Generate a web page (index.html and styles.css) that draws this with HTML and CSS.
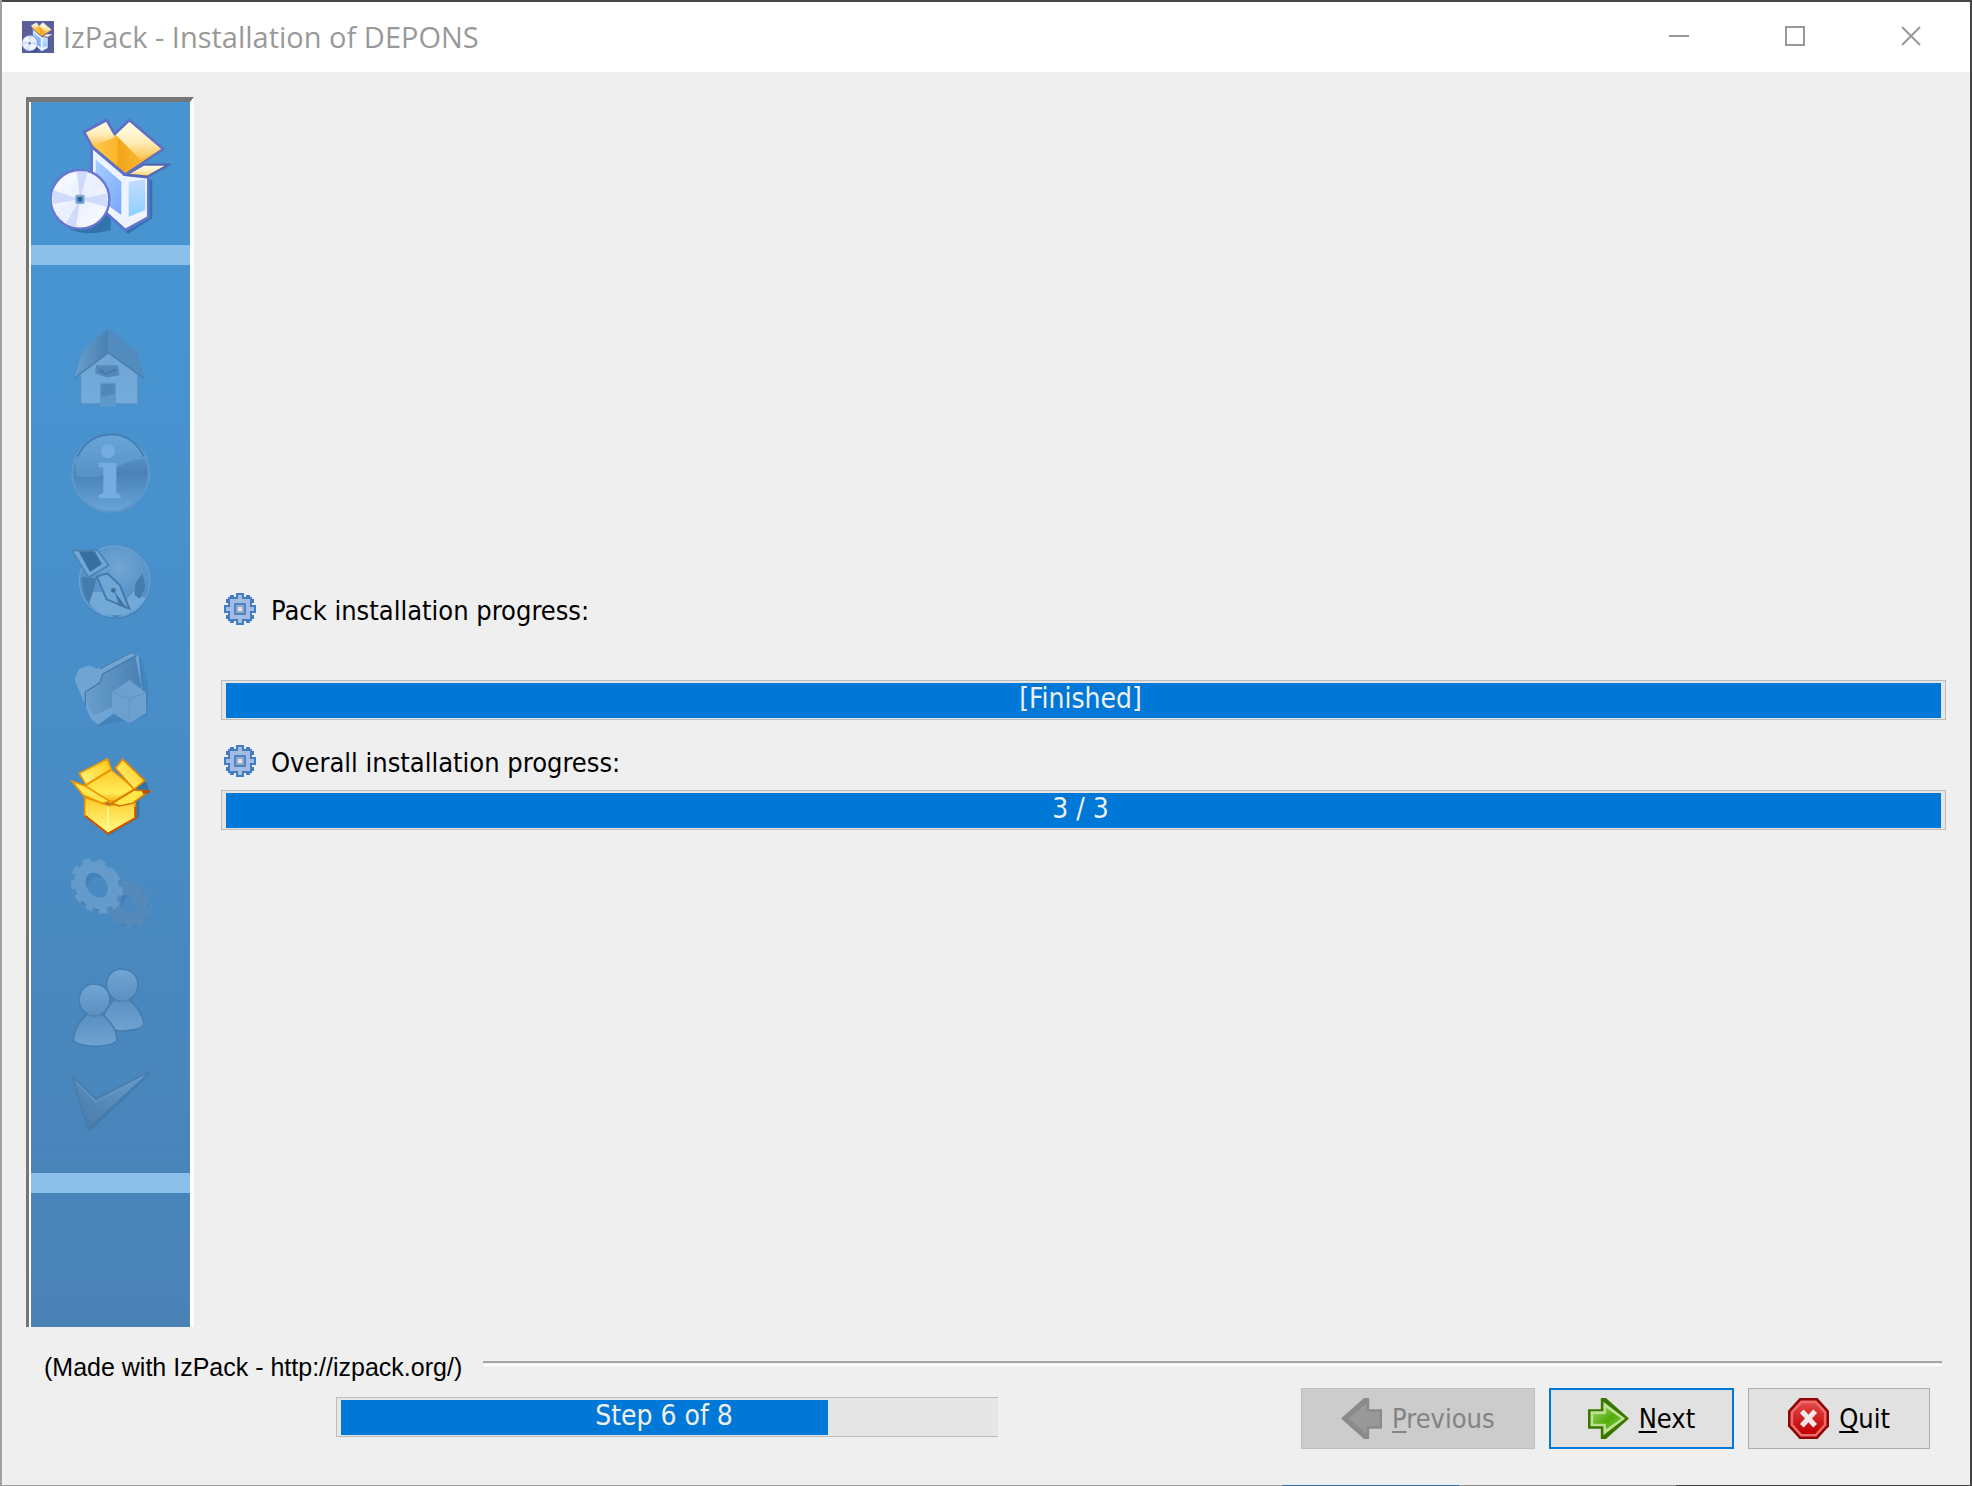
FILE: index.html
```html
<!DOCTYPE html>
<html lang="en">
<head>
<meta charset="utf-8">
<title>IzPack - Installation of DEPONS</title>
<link rel="stylesheet" href="styles.css">
</head>
<body>
<svg class="defs" aria-hidden="true">
  <defs>
    <linearGradient id="flap" x1="0" y1="0" x2="0" y2="1"><stop offset="0" stop-color="#ffffec"/><stop offset=".55" stop-color="#ffedb8"/><stop offset="1" stop-color="#ffc04a"/></linearGradient>
    <linearGradient id="inner" x1="0" y1="0" x2="1" y2="0"><stop offset="0" stop-color="#ffd057"/><stop offset=".42" stop-color="#fbb62c"/><stop offset=".44" stop-color="#f2a516"/><stop offset="1" stop-color="#ffc850"/></linearGradient>
    <linearGradient id="side" x1="0" y1="0" x2="1" y2="1"><stop offset="0" stop-color="#a9d0ff"/><stop offset="1" stop-color="#7aa6fa"/></linearGradient>
    <linearGradient id="front" x1="0" y1="0" x2="0" y2="1"><stop offset="0" stop-color="#c4dcff"/><stop offset="1" stop-color="#8dd0ff"/></linearGradient>
    <linearGradient id="disc" x1="0" y1="0" x2="1" y2="1"><stop offset="0" stop-color="#fff"/><stop offset=".5" stop-color="#e9efff"/><stop offset="1" stop-color="#fff"/></linearGradient>
    <linearGradient id="pale" x1="0" y1="0" x2="0" y2="1"><stop offset="0" stop-color="#6ea5d4"/><stop offset="1" stop-color="#75abdb"/></linearGradient>
    <linearGradient id="deep" x1="0" y1="0" x2="1" y2="0"><stop offset="0" stop-color="#689fcd"/><stop offset="1" stop-color="#4a80b2"/></linearGradient>
    <linearGradient id="ball" x1="0" y1="0" x2="0" y2="1"><stop offset="0" stop-color="#67a3d7"/><stop offset=".5" stop-color="#4a82b6"/><stop offset="1" stop-color="#69a5d8"/></linearGradient>
    <radialGradient id="globe" cx=".55" cy=".3" r=".7"><stop offset="0" stop-color="#72a6d4"/><stop offset=".5" stop-color="#5c97cb"/><stop offset="1" stop-color="#4e8abf"/></radialGradient>
    <linearGradient id="person" x1="0" y1="0" x2="0" y2="1"><stop offset="0" stop-color="#70a5d4"/><stop offset=".5" stop-color="#5b91c1"/><stop offset="1" stop-color="#6ea3d2"/></linearGradient>
    <linearGradient id="tick" x1="1" y1="0" x2="0" y2="1"><stop offset="0" stop-color="#6a9fcf"/><stop offset="1" stop-color="#4678a7"/></linearGradient>
    <linearGradient id="gold" x1="0" y1="0" x2="0" y2="1"><stop offset="0" stop-color="#ffc928"/><stop offset="1" stop-color="#ffff8a"/></linearGradient>
    <linearGradient id="goldlid" x1="0" y1="1" x2="1" y2="0"><stop offset="0" stop-color="#fff98a"/><stop offset="1" stop-color="#ffc70e"/></linearGradient>
    <linearGradient id="goldin" x1="0" y1="0" x2="0" y2="1"><stop offset="0" stop-color="#ffcb2d"/><stop offset=".7" stop-color="#ffec55"/><stop offset="1" stop-color="#f2a000"/></linearGradient>
    <linearGradient id="green" x1="0" y1="0" x2="1" y2="1"><stop offset="0" stop-color="#9fd46a"/><stop offset=".55" stop-color="#52ad0a"/><stop offset="1" stop-color="#7fc740"/></linearGradient>
    <linearGradient id="red" x1="0" y1="0" x2="0" y2="1"><stop offset="0" stop-color="#e04848"/><stop offset=".55" stop-color="#cf2020"/><stop offset="1" stop-color="#bf0000"/></linearGradient>
    <symbol id="installer" viewBox="151 348 360 360">
      <path d="M276 440 376 524 455 540V655L382 702 330 655V690Q240 715 190 675L300 520z" fill="#1d5289" opacity=".5"/>
      <path d="M273 440 372 524 443 532V652L374 690 273 600z" fill="#edf4ff" stroke="#6274cf" stroke-width="8" stroke-linejoin="round"/>
      <path d="M285 478 362 545V645L285 590z" fill="url(#side)"/>
      <path d="M384 545 434 538V630L384 650z" fill="url(#front)"/>
      <path d="M250 396 342 400 390 362 486 446 374 524 274 440z" fill="url(#inner)"/>
      <path d="M250 396 318 362 342 402 342 412 278 438z" fill="url(#flap)"/>
      <path d="M342 402 386 362 484 446 420 480z" fill="url(#flap)"/>
      <path d="M376 524 428 494 504 494 440 530z" fill="url(#flap)" stroke="#5264b4" stroke-width="7"/>
      <path d="M250 396 318 360 342 402 386 360 488 447 374 524 274 440z" fill="none" stroke="#5d6fc6" stroke-width="8" stroke-linejoin="round"/>
      <circle cx="238" cy="598" r="88" fill="url(#disc)" stroke="#6676d2" stroke-width="7"/>
      <path d="M238 598 228 514H262zM238 598 320 580V622zM238 598 226 682 196 670zM238 598 156 570V612z" fill="#c5d2fa" opacity=".75"/>
      <rect x="224" y="584" width="28" height="28" rx="6" fill="#7aa6d6"/><rect x="231" y="591" width="14" height="14" fill="#2d6493"/>
    </symbol>
    <symbol id="cog" viewBox="0 0 16 16">
      <path d="M6 0h4v16H6zM0 6h16v4H0zM3 1h2v14H3zM11 1h2v14h-2zM1 3h14v2H1zM1 11h14v2H1zM2 2h12v12H2z" fill="#447bc5"/>
      <path d="M3 3h10v10H3zM7 1h2v14H7zM1 7h14v2H1z" fill="#a3bce1"/>
      <path d="M5 5h6v6H5z" fill="#5382c3"/><path d="M6 6h4v4H6z" fill="#94abc8"/><path d="M7 7h2v2H7z" fill="#e6e6e6"/>
    </symbol>
  </defs>
</svg>
<div class="desktop">
  <div class="window">
    <header class="titlebar">
      <svg class="app-icon" aria-hidden="true"><use href="#installer"/></svg>
      <h1 class="title">IzPack - Installation of DEPONS</h1>
      <div class="controls">
        <button class="control" aria-label="Minimize"><svg class="glyph" viewBox="0 0 20 20"><path d="M0 10h20"/></svg></button>
        <button class="control" aria-label="Maximize"><svg class="glyph" viewBox="0 0 20 20"><path d="M1 1h18v18H1z"/></svg></button>
        <button class="control" aria-label="Close"><svg class="glyph" viewBox="0 0 20 20"><path d="M1 1l18 18M19 1 1 19"/></svg></button>
      </div>
    </header>

    <div class="body">
      <aside class="sidebar">
        <div class="brand"><svg class="logo" aria-hidden="true"><use href="#installer"/></svg></div>
        <ol class="steps">
          <li><svg class="step" viewBox="153 54 240 240" role="img" aria-label="Welcome">
            <path d="M181 190 265 122 354 190V282H181z" fill="url(#pale)" stroke="#5590c2" stroke-width="5"/>
            <path d="M265 56 188 122 162 205 265 128z" fill="url(#deep)"/>
            <path d="M265 56 350 122 372 205 265 128z" fill="#528bbd"/>
            <path d="M162 205 265 128 372 205" fill="none" stroke="#4a7fae" stroke-width="5"/>
            <path d="M228 166h66l4 30-32 6-20-4-20-8z" fill="#5489ba"/><path d="M238 180l20 12 30-14" fill="none" stroke="#437aab" stroke-width="7"/>
            <path d="M240 218h48v72h-48z" fill="#5d98ca"/><path d="M244 222h40v30l-40 8z" fill="#4f88b9"/>
          </svg></li>
          <li><svg class="step" viewBox="153 372 240 240" role="img" aria-label="Information">
            <circle cx="272" cy="490" r="115" fill="url(#ball)" stroke="#5d98cb" stroke-width="7"/>
            <path d="M166 450Q200 375 272 373T380 445Q320 450 280 480T166 498z" fill="#6ca8da" opacity=".45"/>
            <path d="M172 440Q205 374 272 373T372 440" fill="none" stroke="#427bae" stroke-width="5"/>
            <circle cx="264" cy="424" r="21" fill="#75ade0"/>
            <path d="M236 458h53v90l13 8v9h-66v-9l14-8v-76h-14z" fill="#75ade0"/>
          </svg></li>
          <li><svg class="step" viewBox="153 60 240 240" role="img" aria-label="License">
            <circle cx="286" cy="190" r="108" fill="#3f79ab" opacity=".4"/>
            <circle cx="284" cy="184" r="106" fill="url(#globe)" stroke="#68a0d0" stroke-width="4"/>
            <path d="M196 212 262 218 300 262 340 215 376 236Q345 285 284 288T196 225z" fill="#73a9d6"/>
            <path d="M185 170 228 175 222 208 206 252Q185 215 185 170zM346 190l22-30 8 40-16 36-16-10zM250 280q40 12 60 2l-20 10z" fill="#447cae"/>
            <path d="M230 170 262 160 300 196 328 266 260 238z" fill="#70a6d5" stroke="#447aab" stroke-width="6"/>
            <path d="M282 212l40 54-24-10z" fill="#42749f"/><circle cx="280" cy="211" r="7" fill="#386d9c"/>
            <path d="M156 92 232 90 266 136 206 172z" fill="#70a7d6" stroke="#4c82b2" stroke-width="5"/>
            <path d="M176 94h48l22 38-36 24z" fill="#396f9f"/>
          </svg></li>
          <li><svg class="step" viewBox="153 378 240 240" role="img" aria-label="Target folder">
            <path d="M230 620 380 588 386 500 362 410z" fill="#34699a" opacity=".25"/>
            <path d="M164 480 176 448 206 436 232 446 322 400 356 406 366 520 234 614 212 596z" fill="#70a5d3"/>
            <path d="M196 516 240 488 248 462 346 408 364 500 280 560 222 586 204 560z" fill="url(#deep)"/>
            <path d="M196 560V516L240 488 248 462 350 406M240 446 328 400" fill="none" stroke="#447aab" stroke-width="4"/>
            <path d="M276 516 328 480 378 518V580L328 610 276 578z" fill="#6ca0cf"/><path d="M276 516 328 536 378 518M328 536V608" fill="none" stroke="#6398c8" stroke-width="4"/>
          </svg></li>
          <li><svg class="step" viewBox="153 36 240 240" role="img" aria-label="Installation" aria-current="step">
            <path d="M204 220 264 288 358 232V170L390 158 376 120z" fill="#1b4d80" opacity=".4"/>
            <path d="M194 172 266 196 346 186V234L264 281 194 226z" fill="url(#gold)" stroke="#e88a00" stroke-width="5"/>
            <path d="M346 200V234L264 281 196 228" fill="none" stroke="#c95500" stroke-width="6"/>
            <path d="M196 138 274 90 344 146 272 190z" fill="url(#goldin)" stroke="#f09c00" stroke-width="4"/>
            <path d="M178 100 262 57 274 88 198 134z" fill="url(#goldlid)" stroke="#ee9700" stroke-width="5"/>
            <path d="M286 84 308 58 374 122 342 148z" fill="url(#goldlid)" stroke="#e88800" stroke-width="5"/>
            <path d="M156 124 196 138 270 184 246 190 190 166z" fill="#ffe54f" stroke="#ee9500" stroke-width="5"/>
            <path d="M276 190 342 150 388 153 338 190 298 198z" fill="#ffe847" stroke="#dd7600" stroke-width="5"/>
            <path d="M364 151h26v7l-20 4z" fill="#bd4d00"/><path d="M264 200v62" stroke="#fff59c" stroke-width="5"/>
          </svg></li>
          <li><svg class="step" viewBox="153 354 240 240" role="img" aria-label="Processing">
            <g fill="none" stroke="#386b9b" opacity=".3" transform="translate(5 6)"><ellipse cx="228" cy="438" rx="48" ry="50" stroke-width="32"/><ellipse cx="326" cy="494" rx="38" ry="46" stroke-width="30"/></g>
            <g fill="none" stroke="#5589b9"><ellipse cx="325" cy="494" rx="38" ry="48" stroke-width="34" transform="rotate(-25 325 494)"/><ellipse cx="325" cy="494" rx="56" ry="66" stroke-width="16" stroke-dasharray="21 16" transform="rotate(-25 325 494)"/></g>
            <g fill="none" stroke="#659bca"><ellipse cx="230" cy="436" rx="46" ry="58" stroke-width="34" transform="rotate(-35 230 436)"/><ellipse cx="230" cy="438" rx="64" ry="80" stroke-width="16" stroke-dasharray="24 19" transform="rotate(-35 230 438)"/></g>
          </svg></li>
          <li><svg class="step" viewBox="153 42 240 240" role="img" aria-label="User data">
            <g fill="url(#person)" stroke="#467daf" stroke-width="5">
              <path d="M284 148Q258 132 259 102 264 58 306 57 350 60 354 102 354 134 328 150 366 180 372 222 368 240 306 243 250 240 244 222 252 176 284 148z"/>
              <path d="M202 192Q176 178 177 148 182 104 222 102 266 104 270 148 270 178 244 192 286 222 292 268 288 286 226 289 164 286 160 268 166 222 202 192z"/>
            </g>
            <path d="M196 192q26 12 54 0M284 150q24 8 44 0" fill="none" stroke="#4a7fb0" stroke-width="4"/>
          </svg></li>
          <li><svg class="step" viewBox="153 360 240 240" role="img" aria-label="Finish">
            <path d="M164 390 236 452 390 374 210 546z" fill="#2e6293" opacity=".25"/>
            <path d="M156 378 228 446 392 364 204 538z" fill="url(#tick)" stroke="#457bac" stroke-width="4"/>
            <path d="M172 400 228 456 348 392" fill="none" stroke="#6497c4" stroke-width="4"/>
          </svg></li>
        </ol>
        <div class="sidebar-foot"></div>
      </aside>

      <main class="panel">
        <label class="caption" for="pack"><svg class="cog" aria-hidden="true"><use href="#cog"/></svg><span class="caption-text">Pack installation progress:</span></label>
        <div class="meter meter-pack"><progress class="bar" id="pack" value="1" max="1"></progress><span class="meter-text">[Finished]</span></div>
        <label class="caption" for="overall"><svg class="cog" aria-hidden="true"><use href="#cog"/></svg><span class="caption-text">Overall installation progress:</span></label>
        <div class="meter meter-overall"><progress class="bar" id="overall" value="3" max="3"></progress><span class="meter-text">3 / 3</span></div>
      </main>
    </div>

    <footer class="footer">
      <div class="credit"><span>(Made with IzPack - http://izpack.org/)</span><hr class="rule"></div>
      <div class="actions">
        <div class="meter meter-steps"><progress class="bar bar-open" value="6" max="8" aria-label="Installation step"></progress><span class="meter-text">Step 6 of 8</span></div>
        <div class="buttons">
          <button class="button" disabled><svg class="button-icon" viewBox="0 0 16 16"><path d="M16 4.400H11V0H9L0 8 9 16H11V12H16z" fill="#8b8b8b"/><path d="M15 5.400H10V2L3 8 10 14V11H15z" fill="#999"/></svg><span><u>P</u>revious</span></button>
          <button class="button button-default"><svg class="button-icon" viewBox="0 0 16 16"><path d="M0 4.400H5V0H7L16 8 7 16H5V12H0z" fill="#387600"/><path d="M1 5.200H6V1.500L14.500 8 6 14.500V11H1z" fill="#bde093"/><path d="M2 6.200H7V3.800L13 8 7 12.200V10H2z" fill="url(#green)"/></svg><span><u>N</u>ext</span></button>
          <button class="button"><svg class="button-icon" viewBox="0 0 16 16"><path d="M4.500 0h7L16 5v6l-4.500 5h-7L0 11V5z" fill="#900404"/><path d="M5 1h6l4 4.400v5.200L11 15H5l-4-4.400V5.400z" fill="#ef6a6a"/><path d="M5.400 2h5.200L14 5.800v4.400L10.600 14H5.400L2 10.200V5.800z" fill="url(#red)"/><path d="M5.400 5.200l5.200 5.600M10.600 5.200l-5.200 5.600" stroke="#f5eaea" stroke-width="2"/></svg><span><u>Q</u>uit</span></button>
        </div>
      </div>
    </footer>
  </div>
</div>
</body>
</html>
```
FILE: styles.css
```css
* {
  box-sizing: border-box;
}

body {
  margin: 0;
  font: 27px/32px "DejaVu Sans Condensed", "Noto Sans", sans-serif;
  color: #000;
}

.defs {
  position: absolute;
  width: 0;
  height: 0;
}

.desktop {
  display: flex;
  min-height: 100vh;
  padding: 2px 2px 1px;
  background: linear-gradient(to right, #a0a0a0 65%, #2e6ca4 65% 74%, #8c8c8c 74% 85%, #444 85%);
}

.window {
  flex: 1;
  display: flex;
  flex-direction: column;
  background: #efefef;
  box-shadow: 0 -2px 0 #474747;
}

.titlebar {
  display: flex;
  align-items: center;
  height: 70px;
  padding-left: 20px;
  background: #fff;
}

.app-icon {
  width: 32px;
  height: 32px;
  margin-right: 9px;
  background: #5a5f98;
}

.title {
  margin: 0;
  font: 29px/38px "Open Sans", sans-serif;
  color: #999;
}

.controls {
  display: flex;
  align-self: stretch;
  margin-left: auto;
  padding: 0 1px 2px 0;
}

.control {
  display: grid;
  place-items: center;
  width: 116px;
  padding: 0;
  border: 0;
  background: none;
}

.glyph {
  width: 20px;
  height: 20px;
  fill: none;
  stroke: #999;
  stroke-width: 2;
}

.body {
  flex: 1;
  display: flex;
  gap: 27px;
  padding: 25px 24px 0;
}

.sidebar {
  display: flex;
  flex-direction: column;
  width: 168px;
  border-top: 5px solid #767676;
  border-right: 4px solid #fff;
  border-left: 3px solid #767676;
  box-shadow: inset 2px 0 0 #fff;
  padding-left: 2px;
  background: linear-gradient(#4794d1, #4794d1 20%, #4a82b6) content-box;
}

.brand {
  display: flex;
  justify-content: center;
  height: 163px;
  padding-top: 14px;
  border-bottom: 20px solid #8cbfea;
}

.logo {
  width: 120px;
  height: 120px;
}

.steps {
  flex: 1;
  display: flex;
  flex-direction: column;
  align-items: center;
  gap: 26px;
  margin: 0;
  padding: 63px 0 0;
  border-bottom: 20px solid #8cbfea;
  list-style: none;
}

.step {
  display: block;
  width: 80px;
  height: 80px;
  overflow: visible;
}

.sidebar-foot {
  height: 134px;
}

.panel {
  flex: 1;
  display: flex;
  flex-direction: column;
  justify-content: center;
  padding-bottom: 2px;
}

.caption {
  display: flex;
  align-items: center;
  gap: 15px;
  padding-left: 3px;
}

.caption-text {
  padding-top: 4px;
  line-height: 28px;
}

.cog {
  width: 32px;
  height: 32px;
  shape-rendering: crispEdges;
}

.meter {
  display: grid;
  height: 40px;
}

.meter-pack {
  margin: 55px 0 25px;
}

.meter-overall {
  margin-top: 13px;
}

.meter-steps {
  flex: 0 1 662px;
  margin-bottom: 4px;
}

.bar,
.meter-text {
  grid-area: 1 / 1;
}

.bar {
  appearance: none;
  width: 100%;
  height: 100%;
  padding: 2px 4px 1px;
  border: 1px solid #bcbcbc;
  background: #e6e6e6;
}

.bar-open {
  padding-right: 8px;
  border-right: 0;
}

.bar::-webkit-progress-bar {
  background: none;
}

.bar::-webkit-progress-value {
  background: #0078d7;
}

.meter-text {
  z-index: 1;
  place-self: center;
  padding: 0 6px 2px 0;
  font-size: 28px;
  color: #efefef;
}

.footer {
  padding: 25px 40px 36px 42px;
}

.credit {
  display: flex;
  align-items: center;
  gap: 21px;
  margin-right: -12px;
  font: 25px/30px "Liberation Sans", sans-serif;
}

.rule {
  flex: 1;
  height: 5px;
  margin: 0 0 8px;
  border: solid;
  border-width: 2px 0;
  border-color: #a6a6a6 transparent #fff;
}

.actions {
  display: flex;
  justify-content: space-between;
  align-items: center;
  padding: 6px 0 0 292px;
}

.buttons {
  display: flex;
  gap: 14px;
}

.button {
  display: flex;
  justify-content: center;
  align-items: center;
  gap: 10px;
  height: 61px;
  padding: 0 39px;
  border: 1px solid #adadad;
  background: #e1e1e1;
  font: inherit;
  color: #000;
}

.button:disabled {
  border-color: #bfbfbf;
  background: #ccc;
  color: #838383;
}

.button-default {
  padding: 0 37px;
  border: 2px solid #0078d7;
}

.button-icon {
  width: 41px;
  height: 41px;
}

.button u {
  text-underline-offset: 3px;
  text-decoration-thickness: 2px;
  text-decoration-skip-ink: none;
}
```
